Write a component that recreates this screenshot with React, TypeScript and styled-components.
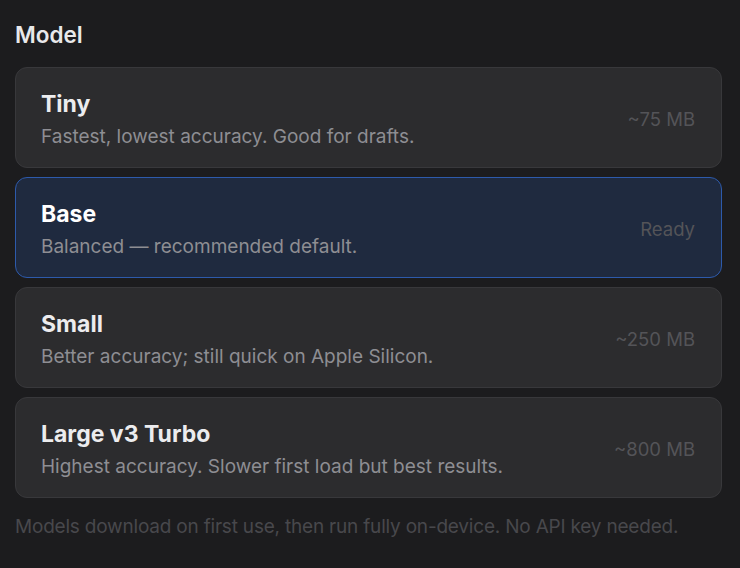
import * as React from "react";
import styled, { createGlobalStyle } from "styled-components";

const GlobalStyle = createGlobalStyle`
  html, body {
    margin: 0;
    padding: 0;
    background: #1c1c1e;
  }
  body {
    font-family: Inter, "Noto Sans", sans-serif;
    -webkit-font-smoothing: antialiased;
  }
`;

const Page = styled.div`
  width: 740px;
  height: 568px;
  box-sizing: border-box;
  padding: 21px 18px 0 15px;
  background: #1c1c1e;
  display: flex;
  flex-direction: column;
`;

const Heading = styled.h2`
  margin: 0 0 19px 0;
  font-size: 22.5px;
  line-height: 27px;
  font-weight: 600;
  color: #e8e8ea;
`;

const List = styled.div`
  display: flex;
  flex-direction: column;
  gap: 9px;
`;

const Card = styled.div<{ $selected?: boolean }>`
  height: 101px;
  box-sizing: border-box;
  padding: 3px 26px 0 25px;
  border-radius: 12px;
  border: ${(p) => (p.$selected ? "1.5px solid #2d5aab" : "1px solid #38383b")};
  background: ${(p) => (p.$selected ? "#1f2a3f" : "#2c2c2e")};
  display: flex;
  align-items: center;
  justify-content: space-between;
`;

const Texts = styled.div`
  display: flex;
  flex-direction: column;
  gap: 7px;
`;

const Name = styled.div<{ $selected?: boolean }>`
  font-size: 23px;
  line-height: 28px;
  font-weight: 700;
  color: ${(p) => (p.$selected ? "#ffffff" : "#ececee")};
`;

const Desc = styled.div`
  font-size: 19px;
  line-height: 24px;
  color: #8e8e93;
`;

const Status = styled.div`
  font-size: 18.5px;
  color: #545458;
`;

const Footnote = styled.p`
  margin: 17px 0 0 0;
  font-size: 19px;
  line-height: 24px;
  color: #48484c;
  letter-spacing: -0.2px;
`;

const models = [
  { name: "Tiny", desc: "Fastest, lowest accuracy. Good for drafts.", status: "~75 MB" },
  { name: "Base", desc: "Balanced \u2014 recommended default.", status: "Ready", selected: true },
  { name: "Small", desc: "Better accuracy; still quick on Apple Silicon.", status: "~250 MB" },
  { name: "Large v3 Turbo", desc: "Highest accuracy. Slower first load but best results.", status: "~800 MB" },
];

export default function App() {
  return (
    <>
      <GlobalStyle />
      <Page>
        <Heading>Model</Heading>
        <List>
          {models.map((m) => (
            <Card key={m.name} $selected={m.selected}>
              <Texts>
                <Name $selected={m.selected}>{m.name}</Name>
                <Desc>{m.desc}</Desc>
              </Texts>
              <Status>{m.status}</Status>
            </Card>
          ))}
        </List>
        <Footnote>Models download on first use, then run fully on-device. No API key needed.</Footnote>
      </Page>
    </>
  );
}
